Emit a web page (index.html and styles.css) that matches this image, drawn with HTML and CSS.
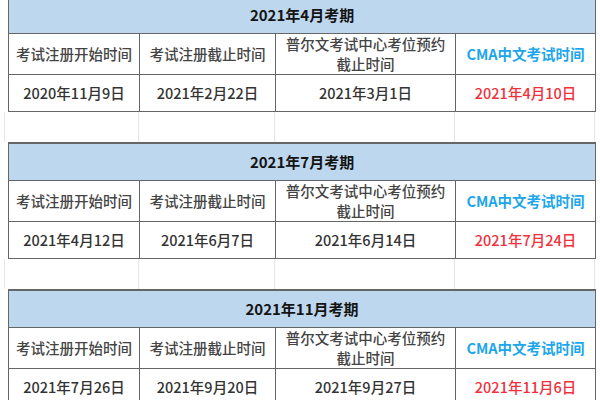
FILE: index.html
```html
<!DOCTYPE html>
<html lang="zh-CN">
<head>
<meta charset="utf-8">
<link rel="stylesheet" href="styles.css">
</head>
<body>
<div class="sheet">
  <table class="exam">
    <colgroup><col class="c1"><col class="c2"><col class="c3"><col class="c4"></colgroup>
    <tr class="title"><td colspan="4">2021年4月考期</td></tr>
    <tr class="head"><td>考试注册开始时间</td><td>考试注册截止时间</td><td>普尔文考试中心考位预约<br>截止时间</td><td class="cma">CMA中文考试时间</td></tr>
    <tr class="data"><td>2020年11月9日</td><td>2021年2月22日</td><td>2021年3月1日</td><td class="red">2021年4月10日</td></tr>
  </table>
  <div class="gap"><span></span><span></span><span></span><span></span><span></span><span></span></div>
  <table class="exam">
    <colgroup><col class="c1"><col class="c2"><col class="c3"><col class="c4"></colgroup>
    <tr class="title"><td colspan="4">2021年7月考期</td></tr>
    <tr class="head"><td>考试注册开始时间</td><td>考试注册截止时间</td><td>普尔文考试中心考位预约<br>截止时间</td><td class="cma">CMA中文考试时间</td></tr>
    <tr class="data"><td>2021年4月12日</td><td>2021年6月7日</td><td>2021年6月14日</td><td class="red">2021年7月24日</td></tr>
  </table>
  <div class="gap"><span></span><span></span><span></span><span></span><span></span><span></span></div>
  <table class="exam">
    <colgroup><col class="c1"><col class="c2"><col class="c3"><col class="c4"></colgroup>
    <tr class="title"><td colspan="4">2021年11月考期</td></tr>
    <tr class="head"><td>考试注册开始时间</td><td>考试注册截止时间</td><td>普尔文考试中心考位预约<br>截止时间</td><td class="cma">CMA中文考试时间</td></tr>
    <tr class="data"><td>2021年7月26日</td><td>2021年9月20日</td><td>2021年9月27日</td><td class="red">2021年11月6日</td></tr>
  </table>
</div>
</body>
</html>
```
FILE: styles.css
```css
html, body {
  margin: 0;
  padding: 0;
  background: #ffffff;
  overflow: hidden;
}
body {
  width: 600px;
  height: 400px;
  font-family: "Noto Sans CJK SC", "Noto Sans", sans-serif;
  color: #3a3a3a;
}
.sheet {
  margin-top: -5px;
}
.exam {
  margin-left: 8px;
  width: 587px;
  border-collapse: collapse;
  table-layout: fixed;
}
.c1 { width: 131px; }
.c2 { width: 136px; }
.c3 { width: 180px; }
.c4 { width: 140px; }
.exam td {
  border: 1.5px solid #666666;
  text-align: center;
  vertical-align: middle;
  padding: 0;
  font-size: 14.5px;
  font-weight: 500;
  line-height: 20px;
  white-space: nowrap;
}
.title td {
  height: 36px;
  background: #bdd7ee;
  font-weight: 700;
  font-size: 15px;
  color: #141414;
  border-top-width: 2px;
}
.head td {
  height: 40px;
  color: #444444;
}
.data td {
  height: 36px;
  color: #333333;
}
.head td.cma {
  color: #1ea6ea;
  font-weight: 700;
  font-size: 14.5px;
}
.data td.red {
  color: #f2303c;
}
.gap {
  display: grid;
  grid-template-columns: 5px 134px 136px 180px 140px 5px;
  height: 30px;
}
.gap span {
  border-right: 1px solid #e6e6e6;
}
.gap span:last-child {
  border-right: none;
}
```
